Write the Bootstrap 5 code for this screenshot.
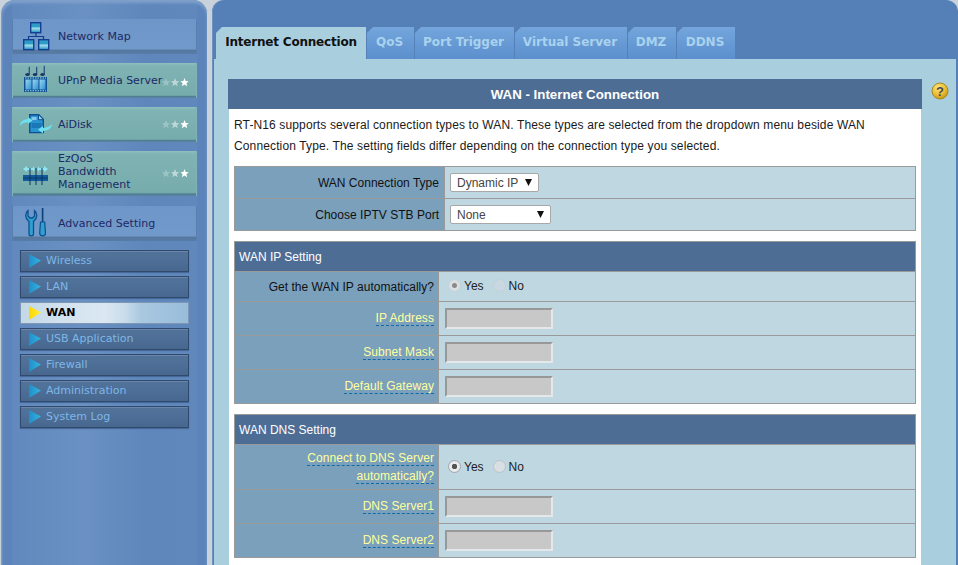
<!DOCTYPE html>
<html lang="en">
<head>
<meta charset="utf-8">
<title>WAN - Internet Connection</title>
<link href="https://cdn.jsdelivr.net/npm/bootstrap@5.3.0/dist/css/bootstrap.min.css" rel="stylesheet">
<style>
html,body{height:565px;overflow:hidden}
body{background:#c9d2da;font-family:"Liberation Sans",Arial,sans-serif;font-size:12px;color:#222}
.shell{height:565px;gap:5px;padding-left:1px}
.side{width:206px;flex:none;background:linear-gradient(90deg,#5c84ba 0,#5c84ba 10px,#6289be 10px,#6a91c2 40%,#5f87bc 70%,#6088bc 195px,#5c84ba 196px);border-radius:14px 14px 0 0;padding:19px 10px 0 10px;border-left:1px solid #7b9dc8;box-shadow:inset 0 3px 3px #7fa0cb}
.mitem{height:35px;margin-bottom:9px;background:linear-gradient(180deg,#6f96c8 0,#7199ca 85%,#55789f 90%,#587ca9 100%);border:solid #5a7fae;border-width:0 1px;font-family:"DejaVu Sans",Verdana,sans-serif;font-size:11px;line-height:13.3px;color:#1c2a66;position:relative;padding-left:45px}
.mitem.teal{background:linear-gradient(180deg,#8dc0bf 0,#7fb3b4 3px,#77acac 92%,#4d7b94 96%,#5d87a5 100%);border-color:#7fb3b4}
.mitem.tall{height:45px;margin-bottom:10px}
.ezq{margin-top:-4px}
.micon{position:absolute;left:9px;top:2px;width:32px;height:32px;overflow:visible}
.micon.wide{left:5px;width:36px}
.micon.low{top:9px}
.stars{position:absolute;right:6px;top:50%;margin-top:-5px;width:28px;height:10px}
.stars.up{margin-top:-3px}
.subs{padding:9px 8px 0 8px}
.sitem{height:22px;margin-bottom:4px;background:linear-gradient(180deg,#527298 0,#4f7098 35%,#47678f 100%);border:1px solid #2f4a6d;box-shadow:inset 0 1px 0 #6886ab,0 1px 1px #47699a;font-family:"DejaVu Sans",Verdana,sans-serif;font-size:11px;color:#7fb6e6;line-height:19px;padding-left:25px;position:relative}
.sitem.on{background:linear-gradient(90deg,#c4d8e6 0,#d2e2ee 25%,#dbe8f2 50%,#c9dcea 62%,#a9c8e0 72%,#98bcdb 100%);color:#000;font-weight:700;border-color:#7e98b4;box-shadow:none}
.tri{position:absolute;left:8px;top:3px;width:12px;height:14px}
.mainp{flex:1;background:#5580b7;border-radius:12px 12px 0 0;position:relative;min-width:0;padding-top:27px;box-shadow:inset 1px 0 0 #6c93c4}
.tabrow{padding-left:4px;gap:1px;height:32px}
.tabx{height:32px;background:linear-gradient(180deg,#74a5dc 0,#5b8fcd 100%);color:#a9d2ee;font-family:"DejaVu Sans",Verdana,sans-serif;font-weight:700;font-size:12px;line-height:30px;text-align:center;padding-right:2px;clip-path:polygon(6px 0,100% 0,100% 100%,0 100%,0 6px);flex:none}
.tabx.on{background:#a9cfdf;color:#111;letter-spacing:-.2px;padding-right:0}
.panelx{background:#a9cfdf;height:506px;margin-left:2px;margin-right:2px;padding:20px 0 0 15px;position:relative}
.sheet{width:692px;background:#fff;height:486px}
.sheethead{height:30px;background:#4e6d95;color:#fff;font-size:13.300px;font-weight:700;line-height:31px;text-align:center;margin:0 -1px}
.intro{margin:0;padding:6px 5px 0;height:57px;line-height:21px;color:#1a1a1a;letter-spacing:.13px}
.gridt{width:682px;margin:0 0 10px 5px;border-collapse:collapse;table-layout:fixed;font-size:12px}
.gridt th,.gridt td{border:1px solid #9a9a9a;padding:0}
.gridt .lab{background:#7aa0bc;color:#111;text-align:right;font-weight:400;padding-right:5px;line-height:18px;letter-spacing:.02px}
.gridt .val{background:#bfd7e1;padding-left:5px;color:#222}
.gridt.narrowl .lab{padding-right:4px}
.gridt.narrowl .val{padding-left:6px}
.gridt .val.rval{padding-bottom:1px}
.gridt .cap{background:#4e6d95;color:#fff;font-weight:400;height:30px;padding-left:4px;text-align:left}
.tipl{color:#ffff9e;border-bottom:1px dashed #0f6aa8;line-height:13px;display:inline-block;letter-spacing:.06px}
.tipl.lift{margin-bottom:2px}
.selx{appearance:none;-webkit-appearance:none;height:19px;background:#fff url("data:image/svg+xml,%3Csvg xmlns='http://www.w3.org/2000/svg' width='7' height='7'%3E%3Cpath d='M0 0h7L3.5 7z' fill='%23111'/%3E%3C/svg%3E") no-repeat right 6px center;border:1px solid #a8a8a8;border-radius:2px;color:#444;font:12px "Liberation Sans",Arial,sans-serif;padding:0 0 0 6px;display:block}
.rad{appearance:none;-webkit-appearance:none;width:13px;height:13px;border-radius:50%;border:1px solid #b9c4cc;background:#d9dee2;margin:0 3px 0 3px;vertical-align:-2px}
.rad:checked{background:radial-gradient(circle,#555 0,#555 2.5px,#eceff1 3px,#dfe3e6 100%);border-color:#a5a5ad}
.rad.dim{background:#c9d8e0;border-color:#c3d1da}
.rad.dim:checked{background:radial-gradient(circle,#8a8a8a 0,#8a8a8a 2px,#d9dfe3 3px)}
.radl{margin-right:6px;color:#222;font-size:12px}
.fld{width:108px;height:21px;background:#c8c8c8;border:solid;border-width:2px;border-color:#989898 #e4e8ea #e4e8ea #989898;display:block;padding:0;border-radius:0}
.helpi{position:absolute;right:7px;top:23px;width:18px;height:18px}
</style>
</head>
<body>
<svg width="0" height="0" class="position-absolute">
  <defs>
    <linearGradient id="boxg" x1="0" y1="0" x2="0" y2="1"><stop offset="0" stop-color="#2f9cc8"/><stop offset=".45" stop-color="#2f9cc8"/><stop offset=".5" stop-color="#9fe0ea"/><stop offset=".7" stop-color="#7cc8e0"/><stop offset="1" stop-color="#1b86bd"/></linearGradient>
    <linearGradient id="cellg" x1="0" y1="0" x2="1" y2="1"><stop offset="0" stop-color="#9ad8f0"/><stop offset="1" stop-color="#2f8fd0"/></linearGradient>
    <linearGradient id="trig" x1="0" y1="0" x2="1" y2="0"><stop offset="0" stop-color="#1f8fcb"/><stop offset="1" stop-color="#35b4de"/></linearGradient>
    <linearGradient id="yelg" x1="0" y1="0" x2="1" y2="0"><stop offset="0" stop-color="#ffd400"/><stop offset="1" stop-color="#fff23a"/></linearGradient>
    <radialGradient id="goldg" cx=".4" cy=".3" r=".8"><stop offset="0" stop-color="#ffe680"/><stop offset=".6" stop-color="#e8b92c"/><stop offset="1" stop-color="#b58a18"/></radialGradient>
    <g id="starset" fill="#fff"><path opacity=".25" d="M4 0l1.200 3 3 .2-2.300 2 .8 3L4 6.600 1.300 8.200l.8-3L0 3.200 2.800 3z"/><path opacity=".5" d="M13 0l1.200 3 3 .2-2.300 2 .8 3L13 6.600 10.300 8.200l.8-3L9 3.200 11.800 3z"/><path d="M22.500 0l1.200 3 3 .2-2.300 2 .8 3-2.700-1.600-2.700 1.600.8-3-2.100-2 2.800-.2z"/></g>
    <path id="triarrow" d="M0 0l12 6.500L0 14z"/>
  </defs>
</svg>
<div class="d-flex shell">
  <nav class="side">
    <div class="mitem d-flex align-items-center">
      <svg class="micon" viewBox="0 0 32 32"><path d="M14 12v3.500M6.500 18v-2.500h15V18" fill="none" stroke="#123f8f" stroke-width="1.200"/><g fill="url(#boxg)" stroke="#123f8f" stroke-width="1.400"><rect x="8.700" y="1.700" width="10" height="10"/><rect x="1.700" y="18.700" width="10" height="10"/><rect x="16.700" y="18.700" width="10" height="10"/></g></svg>
      <span>Network Map</span>
    </div>
    <div class="mitem teal d-flex align-items-center">
      <svg class="micon" viewBox="0 0 32 32"><g fill="#1a3566"><ellipse cx="5.500" cy="9.500" rx="2.200" ry="1.500"/><ellipse cx="13" cy="9.500" rx="2.200" ry="1.500"/><ellipse cx="20.500" cy="9.500" rx="2.200" ry="1.500"/><path d="M6.700 9.500h1V1.500l-1 .8zM14.200 9.500h1V1.500l-1 .8zM21.700 9.500h1V.5l-1 .8z"/></g><rect x="2" y="12" width="23" height="15" fill="#0f4f92"/><g fill="url(#cellg)"><rect x="3.500" y="14.500" width="6" height="10"/><rect x="10.500" y="14.500" width="6" height="10"/><rect x="17.500" y="14.500" width="6" height="10"/></g><path d="M3 13h21M3 25.800h21" stroke="#a9def0" stroke-width="1" stroke-dasharray="1.500 1"/></svg>
      <span>UPnP Media Server</span>
      <svg class="stars up" viewBox="0 0 28 10"><use href="#starset"/></svg>
    </div>
    <div class="mitem teal d-flex align-items-center">
      <svg class="micon wide" viewBox="0 0 36 32"><path d="M11.700 5.700h9l4.600 4.600v13.300H11.700z" fill="#2b93cf" stroke="#0d4f8f" stroke-width="1.400"/><path d="M20.500 5.700v5h5z" fill="#9ad8f0" stroke="#0d4f8f"/><path d="M13.500 8h5v3h-5z" fill="#7fc9ea"/><path d="M13.500 14h10v5h-10z" fill="#1a78b8"/><path d="M2 16.500c0-4 3.500-6 8-6.500V8l4.500 3.500-4.500 3.500v-2c-3.500.3-6 1.500-8 3.500z" fill="#6fe0f0"/><path d="M34 15c0 4.500-4 6.500-9 7v2.500l-5-4 5-3.500v2c3.800-.3 7-1.500 9-4z" fill="#6fe0f0"/></svg>
      <span>AiDisk</span>
      <svg class="stars" viewBox="0 0 28 10"><use href="#starset"/></svg>
    </div>
    <div class="mitem teal tall d-flex align-items-center">
      <svg class="micon low" viewBox="0 0 32 32"><path d="M1 9l4-3v2h6V6l2 3-2 3v-2H5v2zM15 9l2-3v2h5V6l4 3-4 3v-2h-5v2z" fill="#8fe6f0"/><rect x="1" y="15" width="25" height="6" fill="#125a9e"/><path d="M8 8v17M14 8v17M20 8v17" stroke="#0b355f" stroke-width="1"/><path d="M1 18h25" stroke="#0b355f" stroke-width=".8"/></svg>
      <span class="ezq">EzQoS<br>Bandwidth<br>Management</span>
      <svg class="stars" viewBox="0 0 28 10"><use href="#starset"/></svg>
    </div>
    <div class="mitem d-flex align-items-center mb-0">
      <svg class="micon" viewBox="0 0 32 32"><path d="M6 2.500C2.800 5 3 10 6.300 12.700l.7.6V26c0 2.500 4.500 2.500 4.500 0V13.300l.7-.6C15.500 10 15.700 5 12.500 2.500V8l-2 2h-2.500l-2-2z" fill="#2f9fd0" stroke="#0d4f8f" stroke-width="1.300"/><rect x="19.800" y="0" width="1.600" height="14" fill="#0d3f78"/><path d="M18.500 14h4.200l.8 11c0 3.800-5.800 3.800-5.800 0z" fill="#2f9fd0" stroke="#0d4f8f" stroke-width="1.200"/></svg>
      <span>Advanced Setting</span>
    </div>
    <div class="subs">
      <div class="sitem"><svg class="tri" viewBox="0 0 12 14"><use href="#triarrow" fill="url(#trig)"/></svg>Wireless</div>
      <div class="sitem"><svg class="tri" viewBox="0 0 12 14"><use href="#triarrow" fill="url(#trig)"/></svg>LAN</div>
      <div class="sitem on"><svg class="tri" viewBox="0 0 12 14"><use href="#triarrow" fill="url(#yelg)"/></svg>WAN</div>
      <div class="sitem"><svg class="tri" viewBox="0 0 12 14"><use href="#triarrow" fill="url(#trig)"/></svg>USB Application</div>
      <div class="sitem"><svg class="tri" viewBox="0 0 12 14"><use href="#triarrow" fill="url(#trig)"/></svg>Firewall</div>
      <div class="sitem"><svg class="tri" viewBox="0 0 12 14"><use href="#triarrow" fill="url(#trig)"/></svg>Administration</div>
      <div class="sitem"><svg class="tri" viewBox="0 0 12 14"><use href="#triarrow" fill="url(#trig)"/></svg>System Log</div>
    </div>
  </nav>
  <main class="mainp">
    <div class="d-flex tabrow">
      <div class="tabx on" style="width:150px">Internet Connection</div>
      <div class="tabx" style="width:47px">QoS</div>
      <div class="tabx" style="width:99px">Port Trigger</div>
      <div class="tabx" style="width:112px">Virtual Server</div>
      <div class="tabx" style="width:48px">DMZ</div>
      <div class="tabx" style="width:58px">DDNS</div>
    </div>
    <div class="panelx">
      <svg class="helpi" viewBox="0 0 18 18"><circle cx="9" cy="9" r="8" fill="url(#goldg)" stroke="#a88a20"/><text x="9" y="13.500" text-anchor="middle" font-family="Liberation Sans" font-weight="700" font-size="13" fill="#4a4a5a">?</text></svg>
      <div class="sheet">
        <div class="sheethead">WAN - Internet Connection</div>
        <p class="intro">RT-N16 supports several connection types to WAN. These types are selected from the dropdown menu beside WAN Connection Type. The setting fields differ depending on the connection type you selected.</p>
        <table class="gridt">
          <colgroup><col style="width:210px"><col></colgroup>
          <tr style="height:32px"><th class="lab">WAN Connection Type</th><td class="val"><select class="selx" style="width:89px"><option>Dynamic IP</option></select></td></tr>
          <tr style="height:32px"><th class="lab">Choose IPTV STB Port</th><td class="val"><select class="selx" style="width:101px"><option>None</option></select></td></tr>
        </table>
        <table class="gridt narrowl">
          <colgroup><col style="width:204px"><col></colgroup>
          <tr><th class="cap" colspan="2">WAN IP Setting</th></tr>
          <tr style="height:30px"><th class="lab">Get the WAN IP automatically?</th><td class="val rval"><input type="radio" class="rad dim" name="a" checked disabled><span class="radl">Yes</span><input type="radio" class="rad dim" name="a" disabled><span class="radl">No</span></td></tr>
          <tr style="height:34px"><th class="lab"><span class="tipl lift">IP Address</span></th><td class="val"><input class="fld" disabled></td></tr>
          <tr style="height:34px"><th class="lab"><span class="tipl lift">Subnet Mask</span></th><td class="val"><input class="fld" disabled></td></tr>
          <tr style="height:34px"><th class="lab"><span class="tipl lift">Default Gateway</span></th><td class="val"><input class="fld" disabled></td></tr>
        </table>
        <table class="gridt narrowl">
          <colgroup><col style="width:204px"><col></colgroup>
          <tr><th class="cap" colspan="2">WAN DNS Setting</th></tr>
          <tr style="height:45px"><th class="lab"><span class="tipl">Connect to DNS Server</span><br><span class="tipl">automatically?</span></th><td class="val rval"><input type="radio" class="rad" name="b" checked><span class="radl">Yes</span><input type="radio" class="rad" name="b"><span class="radl">No</span></td></tr>
          <tr style="height:34px"><th class="lab"><span class="tipl lift">DNS Server1</span></th><td class="val"><input class="fld" disabled></td></tr>
          <tr style="height:34px"><th class="lab"><span class="tipl lift">DNS Server2</span></th><td class="val"><input class="fld" disabled></td></tr>
        </table>
      </div>
    </div>
  </main>
</div>
</body>
</html>
